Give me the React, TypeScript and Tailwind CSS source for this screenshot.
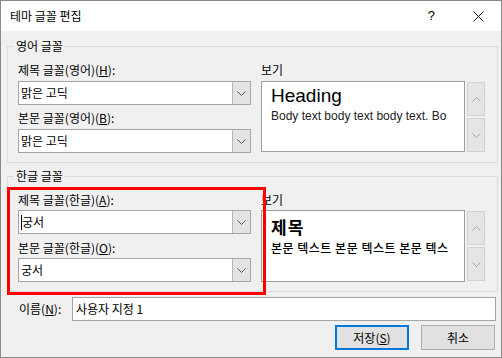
type ChevronProps = {
  up?: boolean
  color: string
}

const Chevron = ({ up, color }: ChevronProps) => (
  <svg width="9" height="5" viewBox="0 0 9 5">
    <path d={up ? 'M0.5 4.5 L4.5 0.5 L8.5 4.5' : 'M0.5 0.5 L4.5 4.5 L8.5 0.5'} stroke={color} fill="none" />
  </svg>
)

type ComboProps = {
  value: string
  caret?: boolean
}

const Combo = ({ value, caret }: ComboProps) => (
  <div className="flex h-[24px] w-[233px] border border-[#a5a5a5] bg-white">
    <div className="flex flex-1 items-center pl-[2px] text-[12px] leading-[16px]">
      {caret && <span className="h-[15px] w-px bg-black" />}
      <span>{value}</span>
    </div>
    <div className="flex w-[18px] items-center justify-center border-l border-[#b5b5b5] bg-[#e3e3e3]">
      <Chevron color="#5a5a5a" />
    </div>
  </div>
)

const Label = ({ text, mn }: { text: string; mn: string }) => (
  <div className="text-[12px] leading-[16px]">
    {text}(<span className="underline">{mn}</span>):
  </div>
)

const ScrollButtons = () => (
  <div className="ml-[2px] mt-[1px] flex flex-col gap-[2px]">
    <div className="flex h-[34px] w-[18px] items-center justify-center border border-[#d2d2d2] bg-[#e5e5e5]">
      <Chevron up color="#a8a8a8" />
    </div>
    <div className="flex h-[34px] w-[18px] items-center justify-center border border-[#d2d2d2] bg-[#e5e5e5]">
      <Chevron color="#a8a8a8" />
    </div>
  </div>
)

type GroupProps = {
  title: string
  height: string
  children: React.ReactNode
}

const Group = ({ title, height, children }: GroupProps) => (
  <div className={`relative ml-[6px] mr-[3px] border border-[#dcdcdc] ${height}`}>
    <span className="absolute -top-[9px] left-[6px] bg-[#f0f0f0] px-[2px] text-[12px] leading-[16px]">{title}</span>
    {children}
  </div>
)

export default function App() {
  return (
    <div className="relative h-[358px] w-[502px] overflow-hidden border border-[#8a8a8a] bg-[#f0f0f0] font-['Noto_Sans_CJK_KR','Noto_Sans',sans-serif] text-black">
      {/* title bar */}
      <div className="flex h-[30px] items-center bg-white">
        <span className="pl-[9px] text-[12px] leading-[16px]">테마 글꼴 편집</span>
        <span className="ml-auto mr-[38px] font-['Liberation_Sans',sans-serif] text-[13px] leading-[16px]">?</span>
        <svg className="mr-[17px]" width="11" height="11" viewBox="0 0 11 11">
          <path d="M0.5 0.5 L10.5 10.5 M10.5 0.5 L0.5 10.5" stroke="#111" strokeWidth="1" />
        </svg>
      </div>

      <div className="pt-[15px]">
        <Group title="영어 글꼴" height="h-[117px]">
          <div className="flex pl-[10px] pt-[15px]">
            <div className="flex w-[233px] flex-col">
              <Label text="제목 글꼴(영어)" mn="H" />
              <div className="mt-[3px]">
                <Combo value="맑은 고딕" />
              </div>
              <div className="mt-[5px]">
                <Label text="본문 글꼴(영어)" mn="B" />
              </div>
              <div className="mt-[3px]">
                <Combo value="맑은 고딕" />
              </div>
            </div>
            <div className="ml-[10px] flex flex-col">
              <div className="text-[12px] leading-[16px]">보기</div>
              <div className="mt-[3px] flex">
                <div className="h-[71px] w-[204px] overflow-hidden whitespace-nowrap border border-[#a0a0a0] bg-white pl-[9px] pt-[2px] font-['Liberation_Sans',sans-serif]">
                  <div className="text-[19px] leading-[24px]">Heading</div>
                  <div className="text-[12px] leading-[16px] text-[#222]">Body text body text body text. Bo</div>
                </div>
                <ScrollButtons />
              </div>
            </div>
          </div>
        </Group>

        <div className="mt-[13px]">
          <Group title="한글 글꼴" height="h-[116px]">
            <div className="flex pl-[10px] pt-[15px]">
              <div className="flex w-[233px] flex-col">
                <Label text="제목 글꼴(한글)" mn="A" />
                <div className="mt-[2px]">
                  <Combo value="궁서" caret />
                </div>
                <div className="mt-[6px]">
                  <Label text="본문 글꼴(한글)" mn="O" />
                </div>
                <div className="mt-[2px]">
                  <Combo value="궁서" />
                </div>
              </div>
              <div className="ml-[10px] flex flex-col">
                <div className="text-[12px] leading-[16px]">보기</div>
                <div className="mt-[2px] flex">
                  <div className="h-[72px] w-[204px] overflow-hidden whitespace-nowrap border border-[#a0a0a0] bg-white pl-[9px] pt-[5px]">
                    <div className="text-[17px] font-bold leading-[22px] tracking-[1px]">제목</div>
                    <div className="mt-[2px] text-[12px] font-medium leading-[16px] tracking-[0.5px]">본문 텍스트 본문 텍스트 본문 텍스</div>
                  </div>
                  <ScrollButtons />
                </div>
              </div>
            </div>
          </Group>
        </div>

        {/* name row */}
        <div className="mt-[5px] flex items-center pl-[18px]">
          <div className="w-[53px] text-[12px] leading-[16px]">
            이름(<span className="underline">N</span>):
          </div>
          <div className="flex h-[24px] w-[424px] items-center border border-[#a5a5a5] bg-white pl-[3px] text-[12px] leading-[16px]">
            사용자 지정 1
          </div>
        </div>

        {/* buttons */}
        <div className="mt-[4px] flex justify-end gap-[12px] pr-[6px]">
          <button className="flex h-[25px] w-[74px] items-center justify-center border-2 border-[#0078d7] bg-[#e1e1e1] text-[12px] leading-[16px]">
            저장(<span className="underline">S</span>)
          </button>
          <button className="flex h-[25px] w-[74px] items-center justify-center border border-[#adadad] bg-[#e1e1e1] text-[12px] leading-[16px]">
            취소
          </button>
        </div>
      </div>

      {/* red highlight annotation */}
      <div className="pointer-events-none absolute left-[6px] top-[186px] h-[108px] w-[259px] border-[3px] border-[#ff0000]" />
    </div>
  )
}
